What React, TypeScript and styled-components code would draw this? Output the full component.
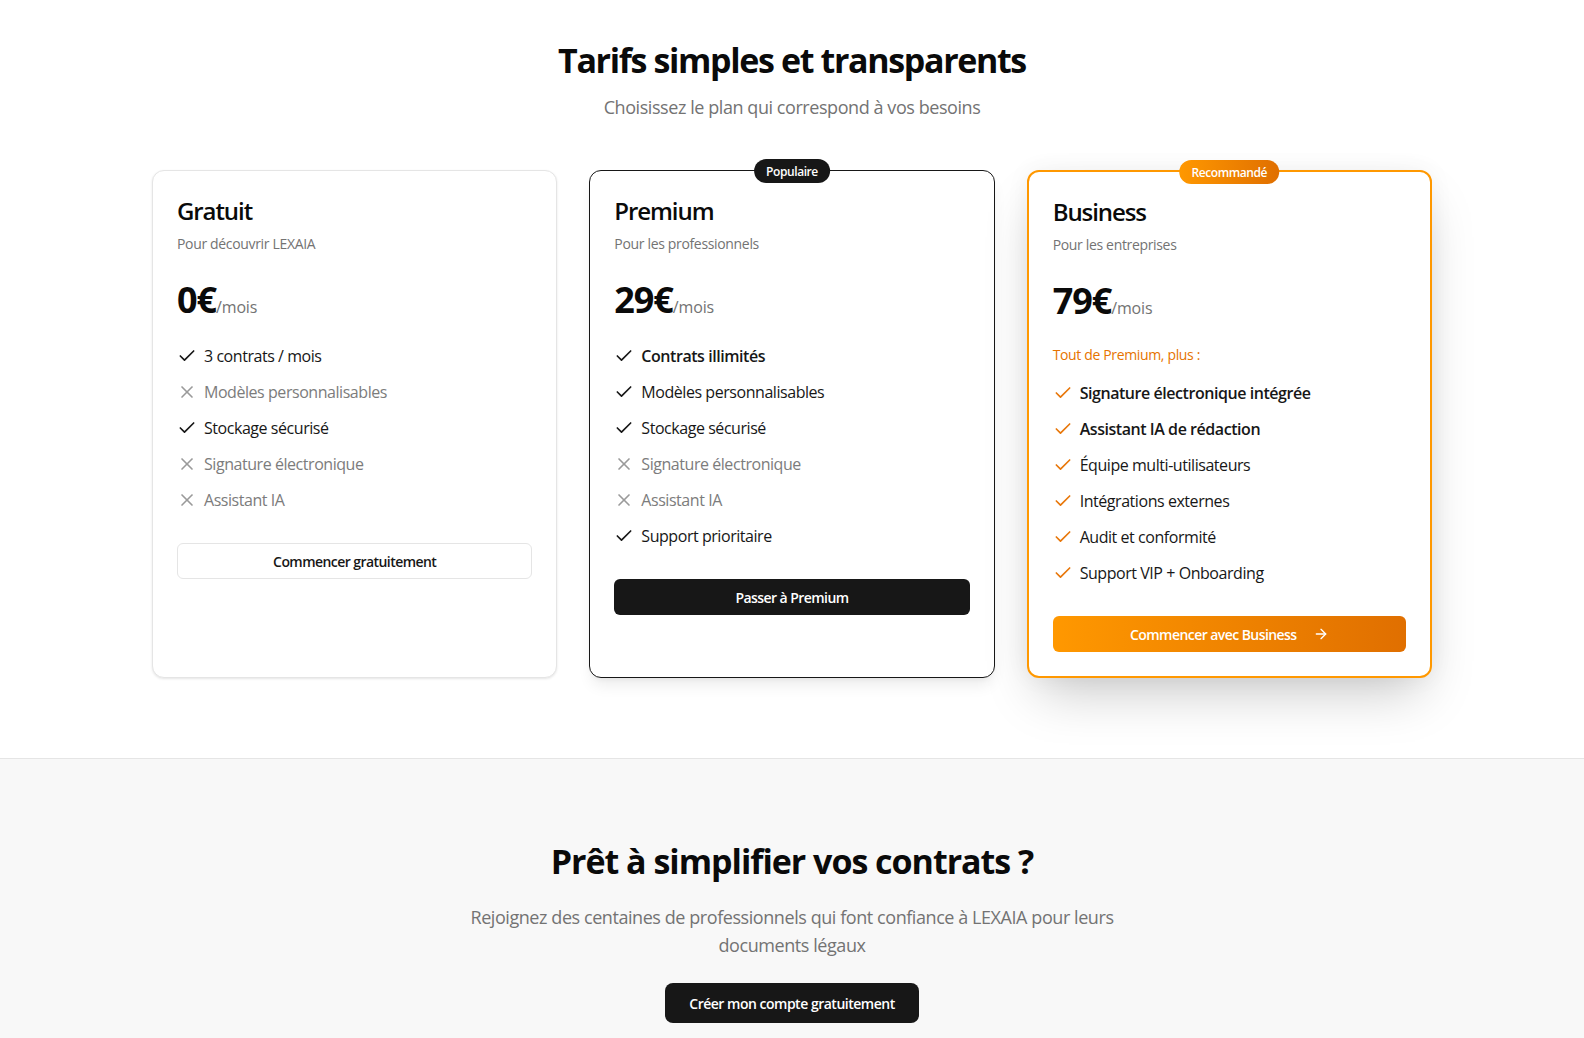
import React from 'react';
import styled, { createGlobalStyle, css } from 'styled-components';
import { Check, X, ArrowRight } from 'lucide-react';

const GlobalStyle = createGlobalStyle`
  *, *::before, *::after { box-sizing: border-box; }
  html, body { margin: 0; padding: 0; background: #ffffff; }
  body {
    font-family: "Open Sans", "Noto Sans", "Liberation Sans", sans-serif;
    color: #0a0a0a;
    -webkit-font-smoothing: antialiased;
  }
`;

const ORANGE = '#ff9800';
const ORANGE_DARK = '#e06f00';

const PricingSection = styled.section`
  padding: 40px 32px 80px;
`;

const Header = styled.header`
  text-align: center;
  margin-bottom: 49px;
`;

const Title = styled.h2`
  margin: 0;
  font-size: 34px;
  line-height: 40px;
  font-weight: 700;
  letter-spacing: -0.04em;
  color: #0a0a0a;
`;

const Lead = styled.p`
  margin: 13px 0 0;
  font-size: 18px;
  line-height: 28px;
  color: #737373;
  letter-spacing: -0.024em;
`;

const Grid = styled.div`
  max-width: 1280px;
  margin: 0 auto;
  display: grid;
  grid-template-columns: repeat(3, minmax(0, 1fr));
  gap: 32px;
`;

type Variant = 'plain' | 'dark' | 'accent';

const Card = styled.article<{ $variant: Variant }>`
  position: relative;
  background: #ffffff;
  border-radius: 12px;
  padding: 24px;
  border: 1px solid #e5e5e5;
  box-shadow: 0 1px 3px rgba(0, 0, 0, 0.07), 0 1px 2px rgba(0, 0, 0, 0.04);
  ${(p) =>
    p.$variant === 'dark' &&
    css`
      border-color: #171717;
      box-shadow: 0 10px 15px -3px rgba(0, 0, 0, 0.08), 0 4px 6px -4px rgba(0, 0, 0, 0.08);
    `}
  ${(p) =>
    p.$variant === 'accent' &&
    css`
      border: 2px solid ${ORANGE};
      box-shadow: 0 25px 50px -12px rgba(0, 0, 0, 0.22), 0 0 24px rgba(0, 0, 0, 0.05);
    `}
`;

const Badge = styled.span<{ $accent?: boolean }>`
  position: absolute;
  top: 0;
  left: 50%;
  transform: translate(-50%, -50%);
  height: 24px;
  padding: 0 12px;
  display: inline-flex;
  align-items: center;
  border-radius: 999px;
  font-size: 12px;
  font-weight: 600;
  letter-spacing: -0.035em;
  color: #ffffff;
  white-space: nowrap;
  background: ${(p) =>
    p.$accent ? `linear-gradient(90deg, ${ORANGE}, ${ORANGE_DARK})` : '#171717'};
`;

const PlanName = styled.h3`
  margin: 0;
  font-size: 24px;
  line-height: 32px;
  font-weight: 600;
  letter-spacing: -0.045em;
  color: #0a0a0a;
`;

const PlanDesc = styled.p`
  margin: 7px 0 0;
  font-size: 14px;
  line-height: 20px;
  color: #737373;
  letter-spacing: -0.024em;
`;

const PriceRow = styled.div`
  margin-top: 26px;
  display: flex;
  align-items: baseline;
`;

const Amount = styled.span`
  font-size: 36px;
  line-height: 40px;
  font-weight: 700;
  letter-spacing: -0.03em;
  color: #0a0a0a;
`;

const Period = styled.span`
  font-size: 16px;
  line-height: 24px;
  color: #737373;
  letter-spacing: -0.01em;
`;

const IncludesLabel = styled.p`
  margin: 24px 0 16px;
  font-size: 14px;
  line-height: 20px;
  font-weight: 500;
  color: #e67300;
  letter-spacing: -0.025em;
`;

const FeatureList = styled.ul<{ $spaced?: boolean }>`
  list-style: none;
  padding: 0;
  margin: ${(p) => (p.$spaced ? '24px' : '0')} 0 0;
  display: flex;
  flex-direction: column;
  gap: 12px;
`;

const Feature = styled.li<{ $off?: boolean; $strong?: boolean }>`
  display: flex;
  align-items: center;
  gap: 7px;
  font-size: 16px;
  line-height: 24px;
  letter-spacing: -0.028em;
  font-weight: ${(p) => (p.$strong ? 600 : 400)};
  color: ${(p) => (p.$off ? '#7c7c7c' : '#171717')};
`;

const IconSlot = styled.span<{ $tone: 'on' | 'off' | 'accent' }>`
  display: inline-flex;
  flex-shrink: 0;
  width: 20px;
  height: 20px;
  color: ${(p) => (p.$tone === 'off' ? '#9a9a9a' : p.$tone === 'accent' ? '#e8770a' : '#171717')};
`;

const PlanButton = styled.button<{ $variant: Variant }>`
  margin-top: 31px;
  width: 100%;
  height: 36px;
  display: flex;
  align-items: center;
  justify-content: center;
  gap: 16px;
  border-radius: 6px;
  font-family: inherit;
  font-size: 14px;
  font-weight: 600;
  letter-spacing: -0.04em;
  cursor: pointer;
  border: 1px solid #e5e5e5;
  background: #ffffff;
  color: #171717;
  ${(p) =>
    p.$variant === 'dark' &&
    css`
      border: 0;
      background: #171717;
      color: #ffffff;
    `}
  ${(p) =>
    p.$variant === 'accent' &&
    css`
      border: 0;
      color: #ffffff;
      background: linear-gradient(90deg, ${ORANGE}, ${ORANGE_DARK});
    `}
`;

const CtaSection = styled.section`
  background: #f8f8f8;
  border-top: 1px solid #e5e5e5;
  padding: 82px 32px 80px;
  text-align: center;
`;

const CtaTitle = styled(Title)`
  letter-spacing: -0.03em;
`;

const CtaText = styled.p`
  max-width: 672px;
  margin: 22px auto 0;
  font-size: 18px;
  line-height: 28px;
  color: #737373;
  letter-spacing: -0.024em;
`;

const CtaButton = styled.button`
  margin-top: 24px;
  height: 40px;
  padding: 0 24px;
  border: 0;
  border-radius: 8px;
  background: #171717;
  color: #ffffff;
  font-family: inherit;
  font-size: 14px;
  font-weight: 600;
  letter-spacing: -0.035em;
  cursor: pointer;
`;

type FeatureItem = { label: string; off?: boolean; strong?: boolean };

type Plan = {
  name: string;
  desc: string;
  price: string;
  variant: Variant;
  badge?: string;
  includes?: string;
  features: FeatureItem[];
  cta: string;
};

const plans: Plan[] = [
  {
    name: 'Gratuit',
    desc: 'Pour découvrir LEXAIA',
    price: '0€',
    variant: 'plain',
    features: [
      { label: '3 contrats / mois' },
      { label: 'Modèles personnalisables', off: true },
      { label: 'Stockage sécurisé' },
      { label: 'Signature électronique', off: true },
      { label: 'Assistant IA', off: true },
    ],
    cta: 'Commencer gratuitement',
  },
  {
    name: 'Premium',
    desc: 'Pour les professionnels',
    price: '29€',
    variant: 'dark',
    badge: 'Populaire',
    features: [
      { label: 'Contrats illimités', strong: true },
      { label: 'Modèles personnalisables' },
      { label: 'Stockage sécurisé' },
      { label: 'Signature électronique', off: true },
      { label: 'Assistant IA', off: true },
      { label: 'Support prioritaire' },
    ],
    cta: 'Passer à Premium',
  },
  {
    name: 'Business',
    desc: 'Pour les entreprises',
    price: '79€',
    variant: 'accent',
    badge: 'Recommandé',
    includes: 'Tout de Premium, plus :',
    features: [
      { label: 'Signature électronique intégrée', strong: true },
      { label: 'Assistant IA de rédaction', strong: true },
      { label: 'Équipe multi-utilisateurs' },
      { label: 'Intégrations externes' },
      { label: 'Audit et conformité' },
      { label: 'Support VIP + Onboarding' },
    ],
    cta: 'Commencer avec Business',
  },
];

function PlanCard({ plan }: { plan: Plan }) {
  const tone = (f: FeatureItem) => (f.off ? 'off' : plan.variant === 'accent' ? 'accent' : 'on');
  return (
    <Card $variant={plan.variant}>
      {plan.badge && <Badge $accent={plan.variant === 'accent'}>{plan.badge}</Badge>}
      <PlanName>{plan.name}</PlanName>
      <PlanDesc>{plan.desc}</PlanDesc>
      <PriceRow>
        <Amount>{plan.price}</Amount>
        <Period>/mois</Period>
      </PriceRow>
      {plan.includes && <IncludesLabel>{plan.includes}</IncludesLabel>}
      <FeatureList $spaced={!plan.includes}>
        {plan.features.map((f) => (
          <Feature key={f.label} $off={f.off} $strong={f.strong}>
            <IconSlot $tone={tone(f)}>
              {f.off ? <X size={20} strokeWidth={2} /> : <Check size={20} strokeWidth={2} />}
            </IconSlot>
            <span>{f.label}</span>
          </Feature>
        ))}
      </FeatureList>
      <PlanButton $variant={plan.variant}>
        <span>{plan.cta}</span>
        {plan.variant === 'accent' && <ArrowRight size={16} strokeWidth={2} />}
      </PlanButton>
    </Card>
  );
}

export default function App() {
  return (
    <>
      <GlobalStyle />
      <PricingSection>
        <Header>
          <Title>Tarifs simples et transparents</Title>
          <Lead>Choisissez le plan qui correspond à vos besoins</Lead>
        </Header>
        <Grid>
          {plans.map((p) => (
            <PlanCard key={p.name} plan={p} />
          ))}
        </Grid>
      </PricingSection>
      <CtaSection>
        <CtaTitle>Prêt à simplifier vos contrats ?</CtaTitle>
        <CtaText>
          Rejoignez des centaines de professionnels qui font confiance à LEXAIA pour leurs documents légaux
        </CtaText>
        <CtaButton>Créer mon compte gratuitement</CtaButton>
      </CtaSection>
    </>
  );
}
